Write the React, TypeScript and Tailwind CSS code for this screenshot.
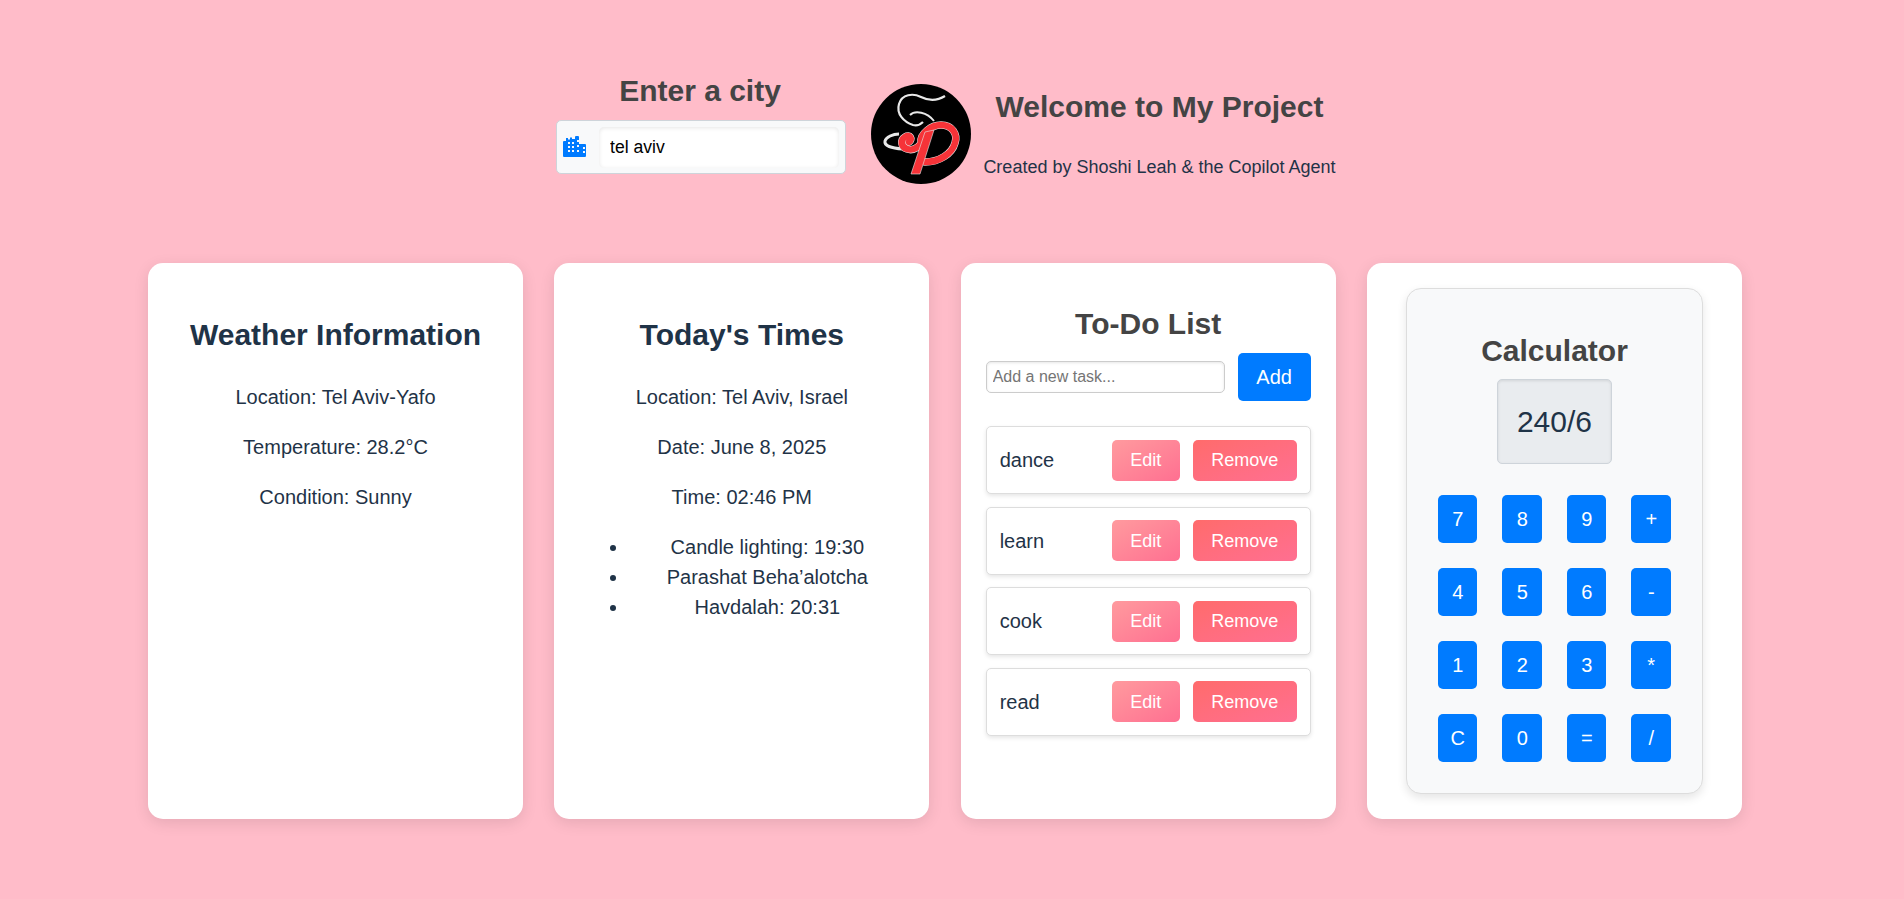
const font = "[font-family:'Liberation_Sans',Arial,sans-serif]";

function Logo() {
  const swirl = "M52 56 C48 64 42 67 36 65 C30 63 29 56 34 53 C39 50 42 55 38 58 M50 58 C49 50 60 41 70 41 C81 41 87 50 84 59 C81 70 68 78 54 78";
  return (
    <svg viewBox="0 0 100 100" className="w-[100px] h-[100px] shrink-0 rounded-full bg-black">
      <path d="M74 12 C66 17 58 17 50 13 C42 9 31 10 28 20 C25 30 33 38 42 41 C46 42 49 41 52 38" fill="none" stroke="#e8e8e8" strokeWidth="2.2" />
      <path d="M39 31 C44 26 56 28 63 37" fill="none" stroke="#e8e8e8" strokeWidth="2" />
      <path d="M28 50 C22 50 15 53 14 57 C13 62 20 64 32 65" fill="none" stroke="#e8e8e8" strokeWidth="3" />
      <g fill="none" strokeLinecap="round">
        <path d={swirl} stroke="#e8e8e8" strokeWidth="7.5" />
        <path d={swirl} stroke="#f63338" strokeWidth="6.5" />
      </g>
      <path d="M54 48 L63 46 L49 90 L40 90 Z" fill="#f63338" stroke="#e8e8e8" strokeWidth="0.6" />
    </svg>
  );
}

function CityIcon() {
  return (
    <svg viewBox="0 0 24 21" className="w-[24px] h-[21px] shrink-0 mt-[-2px]" fill="#007bff">
      <path fillRule="evenodd" d="M1 5h2V2h2v1.5h2V1.5h2V3h3V1a1 1 0 0 1 1-1h2a1 1 0 0 1 1 1v7h6a1 1 0 0 1 1 1v11a1 1 0 0 1-1 1H1a1 1 0 0 1-1-1V6a1 1 0 0 1 1-1Zm4 1v2h2V6H5Zm4 0v2h2V6H9Zm5-2v2h2V4h-2Zm0 5v2h2V9h-2ZM5 10v2h2v-2H5Zm4 0v2h2v-2H9Zm11 1v2h2v-2h-2ZM5 14v2h2v-2H5Zm4 0v2h2v-2H9Zm5 0v2h2v-2h-2Zm6 1v2h2v-2h-2Z" />
    </svg>
  );
}

function Card({ children }: { children: React.ReactNode }) {
  return <section className="w-[375px] h-[556px] bg-white rounded-[15px] shadow-[0_4px_15px_rgba(0,0,0,0.1)] text-center text-[#1f3347]">{children}</section>;
}

const tasks = ["dance", "learn", "cook", "read"];
const keys = ["7", "8", "9", "+", "4", "5", "6", "-", "1", "2", "3", "*", "C", "0", "=", "/"];

export default function App() {
  return (
    <div className={`min-h-[899px] bg-[#ffbcc9] ${font} flex flex-col items-center pr-[14px]`}>
      <header className="flex items-start pt-[73px] w-[1594px] pl-[408px]">
        <div className="w-[290px] flex flex-col items-center">
          <h2 className="text-[30px] leading-[35px] font-bold text-[#444] mb-[12px] -translate-x-[1px]">Enter a city</h2>
          <div className="w-[290px] h-[54px] flex items-center gap-[12px] pl-[6px] pr-[6px] bg-[#f8f9fa] border border-[#ced4da] rounded-[5px]">
            <CityIcon />
            <input readOnly value="tel aviv" className="flex-1 min-w-0 h-[41px] px-[11px] bg-white rounded-[5px] text-[17.6px] text-black outline-none shadow-[inset_0_1px_4px_rgba(0,0,0,0.1)]" />
          </div>
        </div>
        <div className="ml-[25px] mt-[11px]"><Logo /></div>
        <div className="ml-[13px] w-[351px] mt-[16px] flex flex-col items-center">
          <h1 className="text-[30px] leading-[35px] font-bold text-[#444] mb-[33px]">Welcome to My Project</h1>
          <p className="text-[18px] leading-[21px] text-[#1f3347] whitespace-nowrap">Created by Shoshi Leah &amp; the Copilot Agent</p>
        </div>
      </header>

      <main className="flex gap-[31.33px] mt-[79px]">
        <Card>
          <div className="px-[30px] pt-[54px]">
            <h2 className="text-[30px] leading-[35px] font-bold mb-[34px]">Weather Information</h2>
            <div className="flex flex-col gap-[27px] text-[20px] leading-[23px]">
              <p>Location: Tel Aviv-Yafo</p>
              <p>Temperature: 28.2°C</p>
              <p>Condition: Sunny</p>
            </div>
          </div>
        </Card>
        <Card>
          <div className="px-[30px] pt-[54px]">
            <h2 className="text-[30px] leading-[35px] font-bold mb-[34px]">Today's Times</h2>
            <div className="flex flex-col gap-[27px] text-[20px] leading-[23px]">
              <p>Location: Tel Aviv, Israel</p>
              <p>Date: June 8, 2025</p>
              <p>Time: 02:46 PM</p>
            </div>
            <ul className="list-disc pl-[45px] mr-[-6px] mt-[23px] text-[20px] leading-[30px]">
              <li>Candle lighting: 19:30</li>
              <li>Parashat Beha’alotcha</li>
              <li>Havdalah: 20:31</li>
            </ul>
          </div>
        </Card>
        <Card>
          <div className="px-[25px] pt-[43px]">
            <h2 className="text-[30px] leading-[35px] font-bold text-[#444] mb-[12px]">To-Do List</h2>
            <div className="flex items-center gap-[13px]">
              <input readOnly placeholder="Add a new task..." className="w-[239px] h-[32px] px-[6px] border border-[#ccc] rounded-[5px] text-[16px] bg-white outline-none shadow-[inset_0_1px_3px_rgba(0,0,0,0.1)] placeholder:text-[#757575]" />
              <button className="w-[73px] h-[48px] bg-[#007bff] text-white text-[20px] rounded-[5px]">Add</button>
            </div>
            <ul className="mt-[25px] flex flex-col gap-[12.5px]">
              {tasks.map((t) => (
                <li key={t} className="h-[68px] flex items-center pl-[13px] pr-[13px] border border-[#ddd] rounded-[5px] bg-white shadow-[0_2px_4px_rgba(0,0,0,0.1)]">
                  <span className="text-[20px] flex-1 text-left">{t}</span>
                  <button className="w-[68px] h-[41px] pt-[1px] rounded-[5px] text-white text-[18px] bg-gradient-to-br from-[#ff9a9e] to-[#ff6f91]">Edit</button>
                  <button className="ml-[13px] w-[104px] h-[41px] pt-[1px] rounded-[5px] text-white text-[18px] bg-gradient-to-br from-[#ff6b6b] to-[#ff6f91]">Remove</button>
                </li>
              ))}
            </ul>
          </div>
        </Card>
        <Card>
          <div className="pl-[39.5px] pt-[25px]">
            <div className="w-[297px] h-[506px] bg-[#f8f9fa] border border-[#ddd] rounded-[15px] shadow-[0_4px_10px_rgba(0,0,0,0.1)] pl-[30.5px] pr-[31.5px] pt-[44px] flex flex-col items-center">
              <h2 className="text-[30px] leading-[35px] font-bold text-[#444] mb-[11px]">Calculator</h2>
              <div className="w-[115px] h-[85px] flex items-center justify-center bg-[#e9ecef] border border-[#ced4da] rounded-[5px] text-[30px] text-[#1f3347] shadow-[inset_0_1px_3px_rgba(0,0,0,0.1)]">240/6</div>
              <div className="grid grid-cols-4 gap-[25px] w-full mt-[31px]">
                {keys.map((k) => (
                  <button key={k} className="h-[48px] bg-[#007bff] text-white text-[20px] rounded-[5px]">{k}</button>
                ))}
              </div>
            </div>
          </div>
        </Card>
      </main>
    </div>
  );
}
